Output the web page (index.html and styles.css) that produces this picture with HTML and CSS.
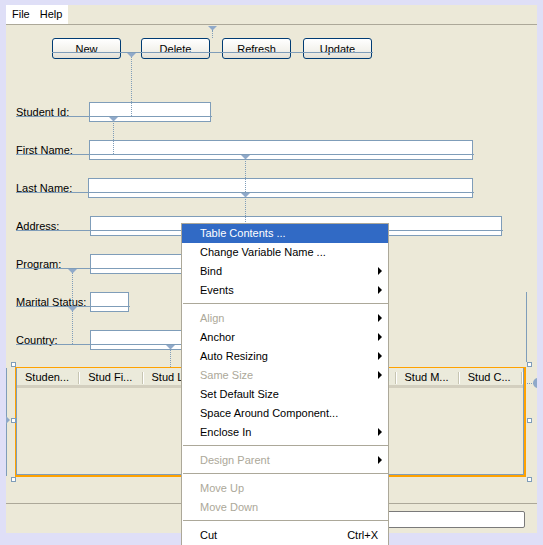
FILE: index.html
```html
<!DOCTYPE html>
<html>
<head>
<meta charset="utf-8">
<link rel="stylesheet" href="styles.css">
</head>
<body>
<div class="frame">
  <div class="menubar">
    <div class="menus"><span class="menu-title">File</span><span class="menu-title">Help</span></div>
  </div>
  <div class="canvas">
    <div class="toolbar">
      <div class="btn-group">
        <button class="btn btn-new">New</button>
        <button class="btn">Delete</button>
        <button class="btn">Refresh</button>
        <button class="btn">Update</button>
      </div>
    </div>
    <div class="form">
      <div class="row"><span class="label">Student Id:</span><div class="field w-id"></div></div>
      <div class="row"><span class="label">First Name:</span><div class="field w-first"></div></div>
      <div class="row"><span class="label label-narrow">Last Name:</span><div class="field w-last"></div></div>
      <div class="row"><span class="label label-wide">Address:</span><div class="field w-addr"></div></div>
      <div class="row"><span class="label label-wide">Program:</span><div class="field w-prog"></div></div>
      <div class="row"><span class="label label-wide">Marital Status:</span><div class="field w-marital"></div></div>
      <div class="row"><span class="label label-wide">Country:</span><div class="field w-country"></div></div>
    </div>
    <div class="table-wrap">
      <div class="table">
        <div class="thead">
          <div class="th">Studen...</div>
          <div class="th">Stud Fi...</div>
          <div class="th">Stud L...</div>
          <div class="th">Stud A...</div>
          <div class="th">Stud P...</div>
          <div class="th">Stud Ph...</div>
          <div class="th">Stud M...</div>
          <div class="th">Stud C...</div>
        </div>
      </div>
      <span class="edge-left"></span>
      <span class="edge-left-arrow"></span>
      <span class="edge-right"></span>
      <span class="link-right"></span>
      <span class="knob-right"></span>
      <span class="handle h-tl"></span>
      <span class="handle h-ml"></span>
      <span class="handle h-bl"></span>
      <span class="handle h-tr"></span>
      <span class="handle h-mr"></span>
      <span class="handle h-br"></span>
    </div>
    <span class="anchor a-top"></span>
    <span class="anchor a-btn"></span>
    <span class="anchor a-id"></span>
    <span class="anchor a-first"></span>
    <span class="anchor a-last"></span>
    <span class="anchor a-prog"></span>
    <span class="anchor a-marital"></span>
    <span class="anchor a-country"></span>
  </div>
  <div class="statusbar"><div class="status-field"></div></div>
</div>

<div class="context-menu">
  <div class="mi active"><span>Table Contents ...</span></div>
  <div class="mi"><span>Change Variable Name ...</span></div>
  <div class="mi"><span>Bind</span><span class="arrow"></span></div>
  <div class="mi"><span>Events</span><span class="arrow"></span></div>
  <div class="sep"></div>
  <div class="mi disabled"><span>Align</span><span class="arrow"></span></div>
  <div class="mi"><span>Anchor</span><span class="arrow"></span></div>
  <div class="mi"><span>Auto Resizing</span><span class="arrow"></span></div>
  <div class="mi disabled"><span>Same Size</span><span class="arrow"></span></div>
  <div class="mi"><span>Set Default Size</span></div>
  <div class="mi"><span>Space Around Component...</span></div>
  <div class="mi"><span>Enclose In</span><span class="arrow"></span></div>
  <div class="sep"></div>
  <div class="mi disabled"><span>Design Parent</span><span class="arrow"></span></div>
  <div class="sep"></div>
  <div class="mi disabled"><span>Move Up</span></div>
  <div class="mi disabled"><span>Move Down</span></div>
  <div class="sep"></div>
  <div class="mi"><span>Cut</span><span class="shortcut">Ctrl+X</span></div>
</div>
</body>
</html>
```

FILE: styles.css
```css
html, body {
  margin: 0;
  height: 545px;
  overflow: hidden;
}
body {
  padding: 5px 6px 0;
  box-sizing: border-box;
  background: #dfdff7;
  font: 11px "Liberation Sans", Arial, sans-serif;
  color: #000;
  position: relative;
}

.frame {
  width: 531px;
  height: 528px;
  background: #ece9d8;
  display: flex;
  flex-direction: column;
  overflow: hidden;
  position: relative;
}

/* menu bar */
.menubar {
  flex: none;
  height: 19px;
  border-bottom: 1px solid #aca899;
}
.menus {
  display: flex;
  width: 62px;
  height: 19px;
  padding-left: 1px;
  box-sizing: border-box;
  background: #fff;
}
.menu-title {
  padding: 0 5px;
  line-height: 19px;
}

/* design canvas */
.canvas {
  flex: none;
  height: 478px;
  position: relative;
}

.toolbar {
  padding: 13px 0 0 46px;
}
.btn-group {
  display: inline-flex;
  gap: 12px;
  position: relative;
}
.btn-group::after {
  content: "";
  position: absolute;
  left: 0;
  right: -1px;
  top: 14px;
  height: 1px;
  background: #7f9db9;
}
.btn {
  width: 69px;
  height: 21px;
  box-sizing: border-box;
  border: 1px solid #003c74;
  border-radius: 3px;
  background: linear-gradient(#ffffff, #f4f3ee 55%, #e2dfd5);
  font: inherit;
  color: #000;
  padding: 0;
}
.btn-new {
  margin-right: 8px;
}

/* form rows */
.form {
  display: flex;
  flex-direction: column;
  align-items: flex-start;
  gap: 18px;
  margin-top: 43px;
  padding-left: 10px;
}
.row {
  display: flex;
  height: 20px;
  position: relative;
}
.row::after {
  content: "";
  position: absolute;
  left: 0;
  right: -1px;
  top: 14px;
  height: 1px;
  background: #7f9db9;
}
.label {
  width: 73px;
  line-height: 20px;
  white-space: nowrap;
}
.label-narrow { width: 72px; }
.label-wide { width: 74px; }
.field {
  height: 20px;
  box-sizing: border-box;
  border: 1px solid #7f9db9;
  background: #fff;
}
.w-id { width: 122px; }
.w-first { width: 384px; }
.w-last { width: 385px; }
.w-addr { width: 412px; }
.w-prog { width: 260px; }
.w-marital { width: 39px; }
.w-country { width: 260px; }

/* table */
.table-wrap {
  position: relative;
  margin: 17px 0 0 9px;
  width: 511px;
  height: 110px;
  box-sizing: border-box;
  border: solid #ffa200;
  border-width: 1px 2px 2px 1px;
}
.table {
  position: absolute;
  inset: 0;
  border: 1px solid #7f9db9;
  border-top: 0;
}
.thead {
  display: grid;
  grid-template-columns: repeat(8, 1fr);
  height: 16px;
  margin-top: 1px;
  border-bottom: 3px solid #d3cfbf;
  background: #ebeadb;
}
.th {
  position: relative;
  padding-left: 8px;
  line-height: 16px;
  white-space: nowrap;
  overflow: hidden;
}
.th::after {
  content: "";
  position: absolute;
  right: 1px;
  top: 3px;
  bottom: 1px;
  width: 1px;
  background: #c7c5b2;
  box-shadow: 1px 0 0 #fff;
}

.handle {
  position: absolute;
  width: 5px;
  height: 5px;
  box-sizing: border-box;
  border: 1px solid #7f9db9;
  background: #fff;
  z-index: 2;
}
.h-tl { left: -5px; top: -6px; }
.h-ml { left: -5px; top: 50px; }
.h-bl { left: -5px; top: 109px; }
.h-tr { left: 511px; top: -6px; }
.h-mr { left: 511px; top: 50px; }
.h-br { left: 511px; top: 109px; }

.edge-left {
  position: absolute;
  left: -10px;
  top: 0;
  width: 1px;
  height: 108px;
  background: #7f9db9;
}
.edge-left-arrow {
  position: absolute;
  left: -10px;
  top: 48px;
  width: 0;
  height: 0;
  border-left: 4px solid #8fa9c9;
  border-top: 4px solid transparent;
  border-bottom: 4px solid transparent;
}
.edge-right {
  position: absolute;
  left: 510px;
  top: -76px;
  width: 1px;
  height: 70px;
  background: #7f9db9;
}
.link-right {
  position: absolute;
  left: 511px;
  top: 15px;
  width: 7px;
  border-top: 1px dotted #7f9db9;
}
.knob-right {
  position: absolute;
  left: 517px;
  top: 10px;
  width: 10px;
  height: 10px;
  border-radius: 50%;
  background: #8fa9c9;
}

/* anchor guides */
.anchor {
  position: absolute;
  width: 9px;
}
.anchor::before {
  content: "";
  position: absolute;
  left: 0;
  top: 0;
  width: 1px;
  height: 0;
  border-left: 4px solid transparent;
  border-right: 4px solid transparent;
  border-top: 4px solid #8fa9c9;
}
.anchor::after {
  content: "";
  position: absolute;
  left: 4px;
  top: 4px;
  bottom: 0;
  border-left: 1px dotted #7f9db9;
}
.a-top { left: 202px; top: 1px; height: 12px; }
.a-btn { left: 121px; top: 28px; height: 63px; }
.a-id { left: 103px; top: 92px; height: 37px; }
.a-first { left: 235px; top: 130px; height: 37px; }
.a-last { left: 235px; top: 168px; height: 37px; }
.a-prog { left: 62px; top: 244px; height: 37px; }
.a-marital { left: 62px; top: 282px; height: 37px; }
.a-country { left: 160px; top: 320px; height: 22px; }

/* status bar */
.statusbar {
  flex: none;
  height: 30px;
  box-sizing: border-box;
  border-top: 1px solid #aca899;
  display: flex;
  justify-content: flex-end;
  padding: 7px 12px 0 0;
}
.status-field {
  width: 260px;
  height: 17px;
  box-sizing: border-box;
  border: 1px solid #7a7a7a;
  border-radius: 2px;
  background: #fff;
}

/* context menu */
.context-menu {
  position: absolute;
  left: 181px;
  top: 223px;
  width: 208px;
  box-sizing: border-box;
  background: #fff;
  border: 1px solid #aca899;
  border-bottom: 0;
  z-index: 10;
}
.mi {
  height: 19px;
  box-sizing: border-box;
  display: flex;
  align-items: center;
  justify-content: space-between;
  padding: 0 6px 2px 18px;
  white-space: nowrap;
}
.mi.active {
  background: #316ac5;
  color: #fff;
}
.mi.disabled {
  color: #aca899;
}
.arrow {
  width: 0;
  height: 0;
  border-left: 4px solid #000;
  border-top: 4px solid transparent;
  border-bottom: 4px solid transparent;
}
.shortcut {
  margin-right: 4px;
}
.sep {
  height: 1px;
  margin: 3px 0 5px 1px;
  background: #aca899;
}
```
